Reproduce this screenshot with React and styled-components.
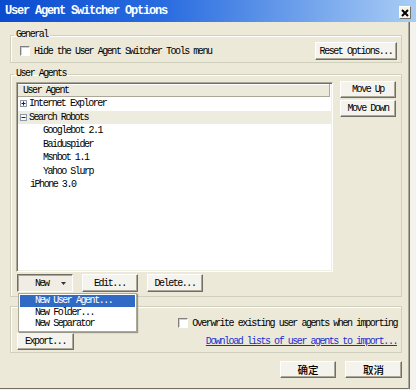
import React from "react";
import styled, { createGlobalStyle, css } from "styled-components";

const Global = createGlobalStyle`
  html, body { margin: 0; padding: 0; background: #f3f2ec; }
  body { width: 416px; height: 390px; overflow: hidden; }
  * { box-sizing: border-box; }
`;

const uiFont = css`
  font-family: "Liberation Mono", "DejaVu Sans Mono", monospace;
  font-size: 10px;
  letter-spacing: -1.45px;
  color: #000;
`;

const Window = styled.div`
  width: 416px;
  height: 390px;
  display: flex;
  flex-direction: column;
`;

const TitleBar = styled.div`
  height: 22px;
  flex: none;
  display: flex;
  align-items: center;
  justify-content: space-between;
  padding: 0 5px 0 5px;
  background: linear-gradient(to right, #0b4ccf 0%, #2a6de0 40%, #a9cdf5 100%);
`;

const Title = styled.span`
  font-family: "Liberation Mono", monospace;
  font-weight: bold;
  font-size: 12px;
  letter-spacing: -1.2px;
  color: #fff;
`;

const CloseBtn = styled.div`
  width: 12px;
  height: 13px;
  margin-top: 3px;
  background: #f4f3ee;
  border: 1px solid;
  border-color: #fff #716f64 #716f64 #fff;
  display: flex;
  align-items: center;
  justify-content: center;
`;

const Client = styled.div`
  width: 409px;
  height: 367px;
  background: #ece9d8;
  border-right: 1px solid #aca899;
  border-bottom: 1px solid #716f64;
  box-shadow: 1px 0 0 #716f64;
  padding: 7px 6px 0 10px;
  display: flex;
  flex-direction: column;
`;

const Group = styled.fieldset`
  margin: ${(p) => p.$mt || 0}px 0 0 0;
  padding: 0;
  min-width: 0;
  border: 1px solid #d0d0bf;
  box-shadow: inset 1px 1px 0 #fff;
`;

const Legend = styled.legend`
  ${uiFont};
  line-height: 12px;
  height: 12px;
  padding: 0 2px;
  margin-left: 3px;
`;

const GeneralRow = styled.div`
  display: flex;
  align-items: center;
  justify-content: space-between;
  padding: 1px 4px 2px 9px;
`;

const CheckLabel = styled.label`
  ${uiFont};
  display: flex;
  align-items: center;
  gap: 4px;
  height: 12px;
  white-space: nowrap;
`;

const Check = styled.span`
  width: 10px;
  height: 10px;
  flex: none;
  background: #fff;
  border: 1px solid;
  border-color: #808080 #fff #fff #808080;
  box-shadow: inset 1px 1px 0 #d4d0c8;
`;

const Btn = styled.button`
  ${uiFont};
  width: ${(p) => p.$w}px;
  height: ${(p) => p.$h || 18}px;
  flex: none;
  margin: 0;
  padding: 0;
  background: #f4f3ee;
  border: 1px solid;
  border-color: #fff #716f64 #716f64 #fff;
  box-shadow: inset -1px -1px 0 #aca899;
  display: flex;
  align-items: center;
  justify-content: center;
  white-space: nowrap;
  ${(p) =>
    p.$pressed &&
    css`
      border-color: #716f64 #fff #fff #716f64;
      box-shadow: inset 1px 1px 0 #aca899;
      background: #efede4;
      justify-content: space-between;
      padding: 0 6px 0 17px;
    `}
  ${(p) =>
    p.$cjk &&
    css`
      font-family: "Noto Sans CJK SC", sans-serif;
      font-size: 10.5px;
      letter-spacing: 0;
      font-weight: 500;
    `}
`;

const AgentsBody = styled.div`
  padding: 1px 4px 4px 5px;
  display: flex;
  flex-direction: column;
`;

const TopRow = styled.div`
  display: flex;
  gap: 7px;
`;

const ListBox = styled.div`
  width: 317px;
  height: 190px;
  margin-top: 1px;
  background: #fff;
  border: 1px solid;
  border-color: #aca899 #fff #fff #aca899;
  box-shadow: inset 1px 1px 0 #716f64, inset -1px -1px 0 #f1efe2;
  padding: 1px 1px 0 1px;
  display: flex;
  flex-direction: column;
`;

const Header = styled.div`
  ${uiFont};
  height: 13px;
  flex: none;
  display: flex;
  align-items: center;
  padding-left: 5px;
  margin-right: 1px;
  background: #ebeadb;
  border-bottom: 1px solid #aca899;
  border-right: 1px solid #aca899;
  box-shadow: inset 0 1px 0 #fff;
`;

const Row = styled.div`
  ${uiFont};
  height: 13.5px;
  flex: none;
  display: flex;
  align-items: center;
  gap: 2px;
  padding-left: ${(p) => p.$indent}px;
  background: ${(p) => (p.$hl ? "#eeebdf" : "transparent")};
  white-space: nowrap;
`;

const SideCol = styled.div`
  display: flex;
  flex-direction: column;
  gap: 2px;
`;

const ButtonRow = styled.div`
  display: flex;
  gap: 9px;
  margin: 2px 0 0 1px;
`;

const MenuAnchor = styled.div`
  position: relative;
`;

const Menu = styled.div`
  position: absolute;
  left: 1px;
  top: 19px;
  width: 119px;
  z-index: 2;
  background: #fff;
  border: 1px solid #aca899;
  box-shadow: 1px 1px 1px rgba(0, 0, 0, 0.35);
  padding: 1px;
`;

const MenuItem = styled.div`
  ${uiFont};
  height: 11.5px;
  display: flex;
  align-items: center;
  padding-left: 15px;
  white-space: nowrap;
  ${(p) =>
    p.$active &&
    css`
      background: #316ac5;
      color: #fff;
    `}
`;

const ImportBody = styled.div`
  padding: 10px 4px 2px 6px;
  display: flex;
  flex-direction: column;
  gap: 4px;
`;

const RightRow = styled.div`
  display: flex;
  justify-content: flex-end;
`;

const SplitRow = styled.div`
  display: flex;
  align-items: center;
  justify-content: space-between;
`;

const Link = styled.a`
  ${uiFont};
  color: #1c2fd0;
  text-decoration: underline;
  white-space: nowrap;
`;

const DialogButtons = styled.div`
  display: flex;
  justify-content: flex-end;
  gap: 9px;
  margin-top: 8px;
`;

const Expander = ({ open }) => (
  <svg width="7" height="7" viewBox="0 0 7 7" style={{ flex: "none" }}>
    <rect x="0.5" y="0.5" width="6" height="6" fill="#f7f7f5" stroke="#8e9aa6" />
    <line x1="1.5" y1="3.5" x2="5.5" y2="3.5" stroke="#222" />
    {!open && <line x1="3.5" y1="1.5" x2="3.5" y2="5.5" stroke="#222" />}
  </svg>
);

const Arrow = () => (
  <svg width="5" height="3" viewBox="0 0 5 3">
    <polygon points="0,0 5,0 2.5,3" fill="#333" />
  </svg>
);

const CloseX = () => (
  <svg width="8" height="8" viewBox="0 0 8 8">
    <path d="M1 1 L7 7 M7 1 L1 7" stroke="#000" strokeWidth="2" />
  </svg>
);

const agents = [
  { label: "Internet Explorer", indent: 2, expander: "closed" },
  { label: "Search Robots", indent: 2, expander: "open", hl: true },
  { label: "Googlebot 2.1", indent: 25 },
  { label: "Baiduspider", indent: 25 },
  { label: "Msnbot 1.1", indent: 25 },
  { label: "Yahoo Slurp", indent: 25 },
  { label: "iPhone 3.0", indent: 12 },
];

export default function App() {
  return (
    <>
      <Global />
      <Window>
        <TitleBar>
          <Title>User Agent Switcher Options</Title>
          <CloseBtn>
            <CloseX />
          </CloseBtn>
        </TitleBar>
        <Client>
          <Group>
            <Legend>General</Legend>
            <GeneralRow>
              <CheckLabel>
                <Check />
                Hide the User Agent Switcher Tools menu
              </CheckLabel>
              <Btn $w={82}>Reset Options...</Btn>
            </GeneralRow>
          </Group>

          <Group $mt={5}>
            <Legend>User Agents</Legend>
            <AgentsBody>
              <TopRow>
                <ListBox>
                  <Header>User Agent</Header>
                  {agents.map((a) => (
                    <Row key={a.label} $indent={a.indent} $hl={a.hl}>
                      {a.expander && <Expander open={a.expander === "open"} />}
                      {a.label}
                    </Row>
                  ))}
                </ListBox>
                <SideCol>
                  <Btn $w={56} $h={17}>Move Up</Btn>
                  <Btn $w={56} $h={17}>Move Down</Btn>
                </SideCol>
              </TopRow>
              <ButtonRow>
                <MenuAnchor>
                  <Btn $w={56} $pressed>
                    New
                    <Arrow />
                  </Btn>
                  <Menu>
                    <MenuItem $active>New User Agent...</MenuItem>
                    <MenuItem>New Folder...</MenuItem>
                    <MenuItem>New Separator</MenuItem>
                  </Menu>
                </MenuAnchor>
                <Btn $w={56}>Edit...</Btn>
                <Btn $w={56}>Delete...</Btn>
              </ButtonRow>
            </AgentsBody>
          </Group>

          <Group $mt={9}>
            <ImportBody>
              <RightRow>
                <CheckLabel>
                  <Check />
                  Overwrite existing user agents when importing
                </CheckLabel>
              </RightRow>
              <SplitRow>
                <Btn $w={57} $h={17}>Export...</Btn>
                <Link href="#">Download lists of user agents to import...</Link>
              </SplitRow>
            </ImportBody>
          </Group>

          <DialogButtons>
            <Btn $w={56} $h={17} $cjk>确定</Btn>
            <Btn $w={57} $h={17} $cjk>取消</Btn>
          </DialogButtons>
        </Client>
      </Window>
    </>
  );
}
